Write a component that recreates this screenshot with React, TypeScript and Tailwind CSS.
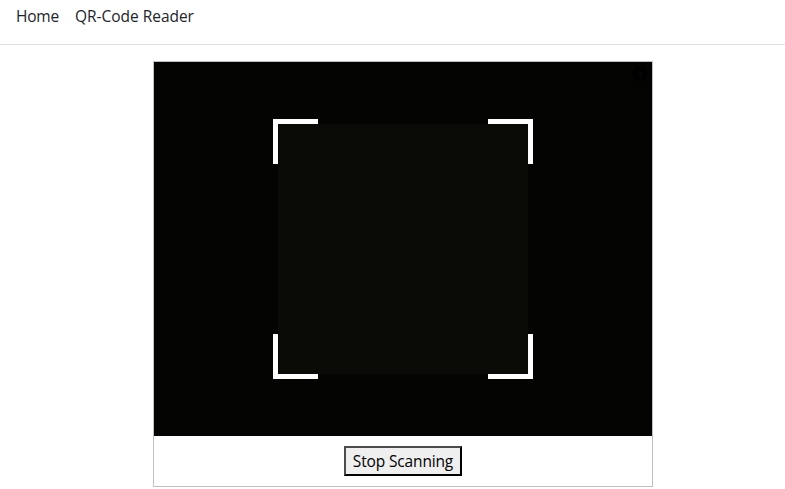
function Navbar() {
  return (
    <nav className="flex h-[45px] items-start gap-4 border-b border-[#dee2e6] px-4 pt-1 text-[15.5px] leading-6 text-[#212529]">
      <a href="#" className="w-[43px] whitespace-nowrap tracking-[-0.2px]">Home</a>
      <a href="#" className="whitespace-nowrap tracking-[-0.03px]">QR-Code Reader</a>
    </nav>
  );
}

function ScanRegion() {
  return (
    <div className="relative h-[260px] w-[260px] p-[5px]">
      <div className="h-full w-full bg-[#0a0b07]" />
      <span className="absolute top-0 left-0 h-[45px] w-[45px] border-t-5 border-l-5 border-white" />
      <span className="absolute top-0 right-0 h-[45px] w-[45px] border-t-5 border-r-5 border-white" />
      <span className="absolute bottom-0 left-0 h-[45px] w-[45px] border-b-5 border-l-5 border-white" />
      <span className="absolute right-0 bottom-0 h-[45px] w-[45px] border-r-5 border-b-5 border-white" />
    </div>
  );
}

function InfoIcon() {
  return (
    <svg className="absolute top-1 right-1 h-4 w-4" viewBox="0 0 16 16" fill="none">
      <circle cx="8" cy="8" r="7.5" fill="#000000" />
      <path d="M6.5 6.5h2V12M6.5 12h4M7.3 3.8h1.6" stroke="#060604" strokeWidth="1.5" />
    </svg>
  );
}

export default function App() {
  return (
    <div className="h-[489px] overflow-hidden bg-white font-['Open_Sans','Noto_Sans',sans-serif]">
      <Navbar />
      <main className="pt-4 pl-[153px]">
        <section className="h-[426px] w-[500px] border border-[silver]">
          <div className="relative flex h-[374px] justify-center bg-[#040402] pt-[57px]">
            <ScanRegion />
            <InfoIcon />
          </div>
          <div className="flex justify-center pt-[10px]">
            <button
              type="button"
              className="h-[30px] w-[118px] border-2 border-t-[#4c4c4c] border-r-black border-b-black border-l-[#4c4c4c] bg-[#efefef] text-[15.5px] leading-6 tracking-[-0.15px] whitespace-nowrap text-black"
            >
              Stop Scanning
            </button>
          </div>
        </section>
      </main>
    </div>
  );
}
